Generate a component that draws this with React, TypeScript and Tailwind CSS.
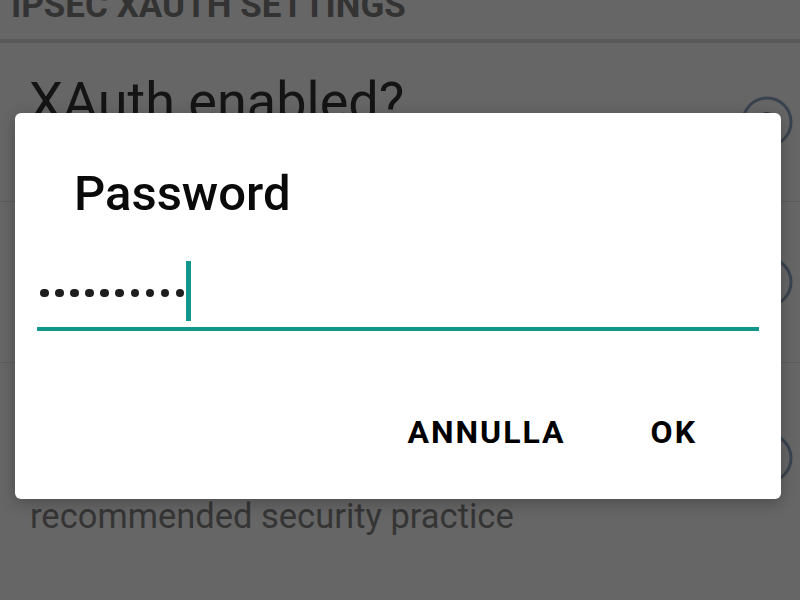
import React from 'react';

const Radio: React.FC<{ className?: string }> = ({ className }) => (
  <svg width="54" height="54" viewBox="0 0 54 54" className={className}>
    <circle cx="27" cy="27" r="24" fill="none" stroke="#3a4350" strokeWidth="3" />
    <circle cx="27" cy="27" r="10" fill="#2c3440" />
  </svg>
);

const PasswordDialog: React.FC = () => {
  const dots = Array.from({ length: 10 });

  return (
    <div className="absolute left-[15px] top-[113px] w-[766px] h-[386px] bg-white rounded-[6px] shadow-[0_4px_16px_rgba(0,0,0,0.25)]">
      <div className="pt-[56px] pl-[59px] text-[49px] leading-none font-medium text-[#0a0a0a]">Password</div>

      <div className="mt-[43px] mx-[22px]">
        <div className="flex items-center h-[60px] pl-[3px]">
          <div className="flex gap-[6.6px] mt-[4px]">
            {dots.map((_, i) => (
              <span key={i} className="block w-[8.5px] h-[8.5px] rounded-full bg-[#1e1e1e]" />
            ))}
          </div>
          <span className="block ml-[2px] w-[5px] h-[60px] bg-[#10968a]" />
        </div>
        <div className="mt-[6px] h-[4px] bg-[#10968a]" />
      </div>

      <div className="mt-[85px] flex justify-end gap-[85px] pr-[84px] text-[32px] leading-none font-bold tracking-[2px] text-black">
        <span>ANNULLA</span>
        <span>OK</span>
      </div>
    </div>
  );
};

export default function App() {
  return (
    <div className="relative w-[800px] h-[600px] overflow-hidden bg-[#666666] font-['Roboto',sans-serif]">
      <div className="h-[39px] overflow-hidden">
        <div className="mt-[-12px] pl-[11px] text-[35px] leading-none font-bold text-[#333]">IPSEC XAUTH SETTINGS</div>
      </div>
      <div className="h-[4px] bg-[#5a5a5a]" />

      <div className="h-[159px] flex justify-between border-b border-[#5c5c5c]">
        <div className="pt-[32px] pl-[29px] text-[54px] leading-none text-[#141414]">XAuth enabled?</div>
        <Radio className="self-center mr-[6px]" />
      </div>

      <div className="h-[161px] flex justify-end border-b border-[#5c5c5c]">
        <Radio className="self-center mr-[6px]" />
      </div>

      <div className="flex justify-between">
        <div className="pt-[136px] pl-[30px] text-[34.5px] leading-none text-[#353535]">recommended security practice</div>
        <Radio className="mt-[68px] mr-[6px]" />
      </div>

      <PasswordDialog />
    </div>
  );
}
